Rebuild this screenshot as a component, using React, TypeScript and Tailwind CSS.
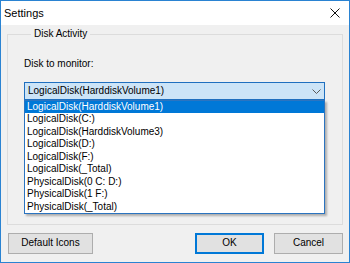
import React from "react";

const disks = [
    "LogicalDisk(HarddiskVolume1)",
    "LogicalDisk(C:)",
    "LogicalDisk(HarddiskVolume3)",
    "LogicalDisk(D:)",
    "LogicalDisk(F:)",
    "LogicalDisk(_Total)",
    "PhysicalDisk(0 C: D:)",
    "PhysicalDisk(1 F:)",
    "PhysicalDisk(_Total)",
];

function Button({ label, primary }: { label: string; primary?: boolean }) {
    return (
        <button
            type="button"
            className={
                primary
                    ? "w-[69px] h-[21px] bg-[#e1e1e1] border-2 border-[#0078d7] text-[10px] leading-[12px] text-black"
                    : "w-[69px] h-[21px] bg-[#e1e1e1] border border-[#adadad] text-[10px] leading-[12px] text-black"
            }
        >
            {label}
        </button>
    );
}

export default function App() {
    const selected = 0;

    return (
        <div className="w-[350px] h-[263px] border border-[#2a83d2] bg-[#f0f0f0] flex flex-col font-['Liberation_Sans',Arial,sans-serif] text-black select-none">
            {/* title bar */}
            <div className="h-[24px] bg-white flex items-center justify-between pl-[3px] pr-[8px] shrink-0">
                <span className="text-[11px] leading-[13px]">Settings</span>
                <svg width="10" height="10" viewBox="0 0 10 10" className="mr-[1px]">
                    <path d="M0.5 0.5 L9.5 9.5 M9.5 0.5 L0.5 9.5" stroke="#111" strokeWidth="1" />
                </svg>
            </div>

            {/* client */}
            <div className="flex-1 flex flex-col px-[6px]">
                <fieldset className="mt-[3px] border border-[#dcdcdc] pl-[16px] pb-[10px]">
                    <legend className="ml-[7px] px-[3px] text-[10px] leading-[12px]">Disk Activity</legend>

                    <div className="mt-[18px] text-[10px] leading-[12px]">Disk to monitor:</div>

                    <div className="mt-[12px] w-[301px] h-[18px] bg-[#cce4f7] border border-[#1f6fbf] flex items-center justify-between pl-[3px] pr-[3px]">
                        <span className="text-[10px] leading-[12px]">{disks[0]}</span>
                        <svg width="9" height="5" viewBox="0 0 9 5">
                            <path d="M0.5 0.5 L4.5 4.5 L8.5 0.5" stroke="#5a5a5a" strokeWidth="1" fill="none" />
                        </svg>
                    </div>

                    <ul className="w-[301px] bg-white border border-[#2b74c0] shadow-[2px_2px_2px_rgba(0,0,0,0.28)]">
                        {disks.map((d, idx) => (
                            <li
                                key={d}
                                className={
                                    idx === selected
                                        ? "h-[12.45px] leading-[12.45px] pl-[2px] text-[10px] bg-[#0078d7] text-white"
                                        : "h-[12.45px] leading-[12.45px] pl-[2px] text-[10px]"
                                }
                            >
                                {d}
                            </li>
                        ))}
                    </ul>
                </fieldset>

                <div className="mt-[8px] flex items-center pl-[1px]">
                    <button
                        type="button"
                        className="w-[85px] h-[21px] bg-[#e1e1e1] border border-[#adadad] text-[10px] leading-[12px]"
                    >
                        Default Icons
                    </button>
                    <div className="ml-auto flex gap-[10px]">
                        <Button label="OK" primary />
                        <Button label="Cancel" />
                    </div>
                </div>
            </div>
        </div>
    );
}
